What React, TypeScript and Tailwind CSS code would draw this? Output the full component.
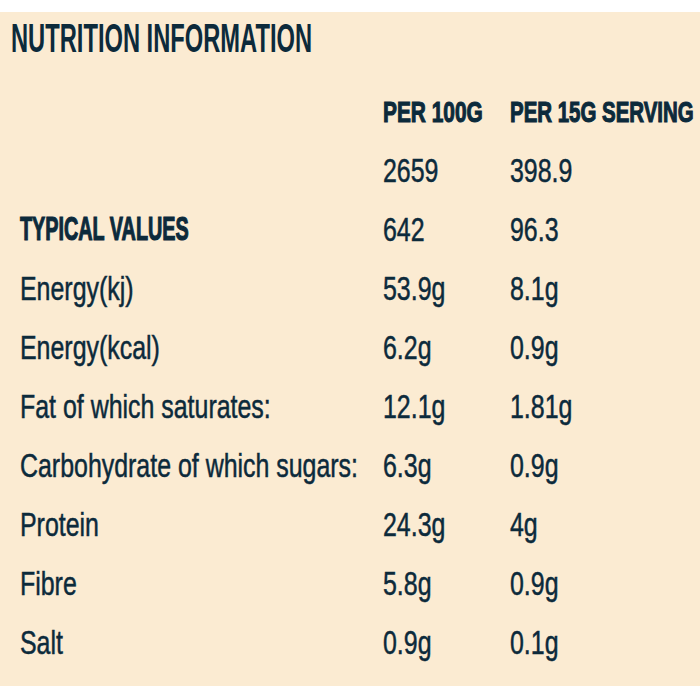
import React from "react";

const rows: [string, string, string][] = [
  ["", "2659", "398.9"],
  ["TYPICAL VALUES", "642", "96.3"],
  ["Energy(kj)", "53.9g", "8.1g"],
  ["Energy(kcal)", "6.2g", "0.9g"],
  ["Fat of which saturates:", "12.1g", "1.81g"],
  ["Carbohydrate of which sugars:", "6.3g", "0.9g"],
  ["Protein", "24.3g", "4g"],
  ["Fibre", "5.8g", "0.9g"],
  ["Salt", "0.9g", "0.1g"],
];

function Body({ children }: { children: React.ReactNode }) {
  return (
    <span className="inline-block origin-left scale-x-[0.733] whitespace-nowrap text-[34px] leading-none [-webkit-text-stroke:0.5px_#0c2a3b]">
      {children}
    </span>
  );
}

export default function App() {
  return (
    <div
      className="h-[700px] w-[700px] overflow-hidden bg-white text-[#0c2a3b]"
      style={{ fontFamily: '"Liberation Sans", Arial, sans-serif' }}
    >
      <div className="mt-[12px] h-[674px] bg-[#fbebd2] pt-[6px]">
        <div className="h-[40px] pl-[11px]">
          <span className="inline-block origin-left scale-x-[0.578] whitespace-nowrap text-[41px] font-bold leading-[40px]">
            NUTRITION INFORMATION
          </span>
        </div>
        <div className="mt-[27px] pl-[20px]">
          <div className="grid h-[56px] grid-cols-[363px_127px_1fr] items-center">
            <div />
            <div>
              <span className="inline-block origin-left scale-x-[0.72] whitespace-nowrap text-[29px] font-bold leading-none [-webkit-text-stroke:1.1px_#0c2a3b]">
                PER 100G
              </span>
            </div>
            <div>
              <span className="inline-block origin-left scale-x-[0.705] whitespace-nowrap text-[29px] font-bold leading-none [-webkit-text-stroke:1.1px_#0c2a3b]">
                PER 15G SERVING
              </span>
            </div>
          </div>
          {rows.map(([label, a, b], i) => (
            <div
              key={i}
              className="grid h-[59px] grid-cols-[363px_127px_1fr] items-center"
            >
              <div>
                {label === "TYPICAL VALUES" ? (
                  <span className="inline-block origin-left scale-x-[0.6] whitespace-nowrap text-[33px] font-bold leading-none [-webkit-text-stroke:1.2px_#0c2a3b]">
                    {label}
                  </span>
                ) : (
                  <Body>{label}</Body>
                )}
              </div>
              <div>
                <Body>{a}</Body>
              </div>
              <div>
                <Body>{b}</Body>
              </div>
            </div>
          ))}
        </div>
      </div>
    </div>
  );
}
